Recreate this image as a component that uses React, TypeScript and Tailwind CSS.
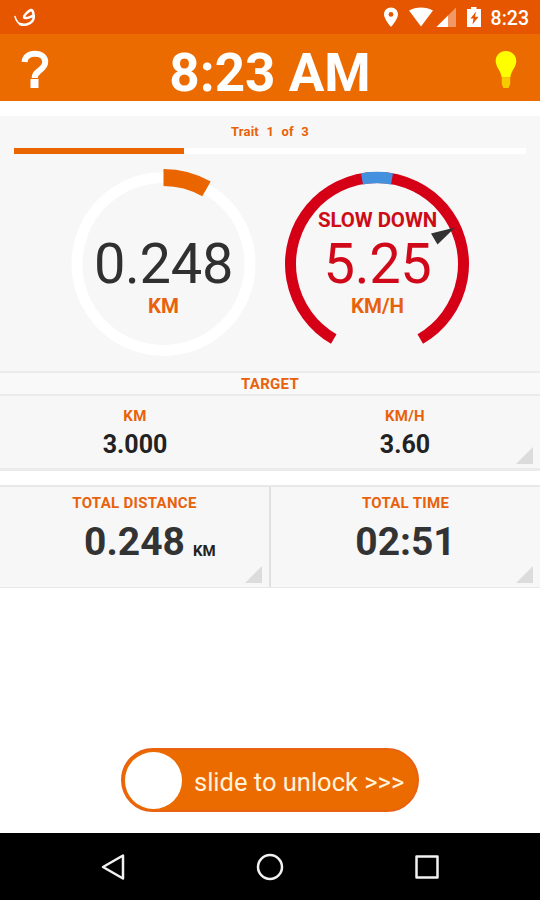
import React from 'react';
import { clsx } from 'clsx';

interface LabelProps {
  children: React.ReactNode;
  className?: string;
}

const Label: React.FC<LabelProps> = ({ children, className }) => (
  <div className={clsx('font-bold text-[#e8620c] whitespace-nowrap', className)}>{children}</div>
);

const Corner: React.FC = () => (
  <svg className="absolute right-[7px] bottom-[4px]" width="17" height="17" viewBox="0 0 17 17">
    <path d="M17 0V17H0Z" fill="#dcdcdc" />
  </svg>
);

// clockwise arc, angles in degrees from 12 o'clock
const arc = (cx: number, cy: number, r: number, from: number, to: number) => {
  const pt = (a: number) => {
    const rad = (a * Math.PI) / 180;
    return `${(cx + r * Math.sin(rad)).toFixed(2)} ${(cy - r * Math.cos(rad)).toFixed(2)}`;
  };
  return `M${pt(from)}A${r} ${r} 0 ${to - from > 180 ? 1 : 0} 1 ${pt(to)}`;
};

const StatusBar: React.FC = () => (
  <div className="h-[34px] bg-[#e65500] flex items-center justify-between pl-[14px] pr-[11px]">
    <svg width="22" height="20" viewBox="0 0 22 20" fill="none" stroke="#fff" strokeLinecap="round" strokeLinejoin="round">
      <path d="M1 9.500C2 14 5 17.500 9.500 17.800" strokeWidth="1.500" />
      <path d="M6 17C12 19.500 20.500 15.500 19.700 9C19.300 5 18.500 2.500 17 3C14.500 4 10 8 10 10.200C10.500 12.200 16.500 10.500 19 8.500" strokeWidth="2.500" />
    </svg>
    <div className="flex items-center">
      <svg width="104" height="22" viewBox="0 0 104 22" className="mr-[4px]">
        <path fillRule="evenodd" d="M8 1.500C4 1.500 1 4.500 1 8.300C1 13.300 8 21 8 21S15 13.300 15 8.300C15 4.500 12 1.500 8 1.500ZM8 6A2.400 2.400 0 1 1 8 10.800A2.400 2.400 0 1 1 8 6Z" fill="#fff" />
        <path d="M26 4.500C33 0.500 43 0.500 50 4.500L38 20.500Z" fill="#fff" />
        <path d="M73 1.500V21H53.500Z" fill="#fff" opacity=".4" />
        <path d="M65 9.500V21H53.500Z" fill="#fff" />
        <path d="M88 1H93.500V3H98V21H84V3H88Z" fill="#fff" />
        <path d="M93 5.500L87.500 12.500H90.500L89.500 18.500L95.500 10.800H92Z" fill="#e65500" />
      </svg>
      <span className="text-[19.5px] leading-[20px] font-medium text-white mt-[3px]">8:23</span>
    </div>
  </div>
);

const Header: React.FC = () => (
  <div className="h-[67px] bg-[#ec6b00] grid grid-cols-[70px_1fr_70px] items-center">
    <svg className="ml-[20px]" width="30" height="40" viewBox="0 0 30 40">
      <path d="M4.500 13C5 8 8.500 4.800 14.800 4.800C21.500 4.800 25.200 8 25.200 13C25.200 16.500 23 18.800 19.800 21.300C16.500 24 14.700 25 14.700 29" fill="none" stroke="#fff" strokeWidth="6" />
      <path d="M10.500 30H18.500V39H10.500Z" fill="#fff" />
    </svg>
    <div className="text-center text-[53px] leading-[60px] font-bold text-white whitespace-nowrap mt-[9px]">8:23 AM</div>
    <svg className="ml-[25px]" width="22" height="40" viewBox="0 0 22 40">
      <path d="M11 2C4.800 2 0.700 6.500 0.700 12C0.700 18 5.500 21 6.800 28.500H15.200C16.500 21 21.300 18 21.300 12C21.300 6.500 17.200 2 11 2Z" fill="#ff0" />
      <path d="M6.800 28.500H15.200V35L13.500 39H8.500L6.800 35Z" fill="#f5cc00" />
    </svg>
  </div>
);

const DistanceGauge: React.FC = () => (
  <div className="relative w-[214px] h-[206px]">
    <svg className="absolute inset-0" width="214" height="206" viewBox="0 0 214 206" fill="none">
      <circle cx="107.500" cy="104" r="86.500" stroke="#fff" strokeWidth="11" />
      <path d={arc(107.5, 104, 86.5, 0, 29.8)} stroke="#ea6500" strokeWidth="17" />
    </svg>
    <div className="relative pt-[74px] pl-px text-center">
      <div className="text-[56px] leading-[60px] tracking-[-0.3px] text-[#303030]">0.248</div>
      <Label className="text-[20.5px] leading-6">KM</Label>
    </div>
  </div>
);

const SpeedGauge: React.FC = () => (
  <div className="relative w-[214px] h-[206px]">
    <svg className="absolute inset-0" width="214" height="206" viewBox="0 0 214 206" fill="none">
      <path d={arc(107, 104, 86.5, -150, 150)} stroke="#d60016" strokeWidth="11" />
      <path d={arc(107, 104, 86.5, -10, 10)} stroke="#4390df" strokeWidth="11.500" />
      <path d="M185 67.500L161 73.500L167.500 84.500Z" fill="#333" />
    </svg>
    <div className="relative pt-[48px] pl-px text-center">
      <div className="text-[20.5px] leading-6 font-bold tracking-[-0.1px] text-[#cd0c18]">SLOW DOWN</div>
      <div className="mt-[2px] text-[56px] leading-[60px] tracking-[-0.3px] text-[#d0091a]">5.25</div>
      <Label className="text-[20.5px] leading-6">KM/H</Label>
    </div>
  </div>
);

const TARGETS = [
  { unit: 'KM', value: '3.000' },
  { unit: 'KM/H', value: '3.60' },
];

const TOTALS = [
  { label: 'TOTAL DISTANCE', value: '0.248', unit: 'KM' },
  { label: 'TOTAL TIME', value: '02:51' },
];

const NavBar: React.FC = () => (
  <div className="h-[67px] bg-black flex items-center justify-between px-[98px]">
    <svg width="30" height="30" viewBox="0 0 30 30" fill="none" stroke="#f2f2f2" strokeWidth="2.500">
      <path d="M25 3.500V26.500L5 15Z" strokeLinejoin="round" />
    </svg>
    <svg width="30" height="30" viewBox="0 0 30 30" fill="none" stroke="#f2f2f2" strokeWidth="2.500">
      <circle cx="15" cy="15" r="12" />
    </svg>
    <svg width="30" height="30" viewBox="0 0 30 30" fill="none" stroke="#f2f2f2" strokeWidth="2.500">
      <path d="M4.500 4.500H25.500V25.500H4.500Z" strokeLinejoin="round" />
    </svg>
  </div>
);

const App: React.FC = () => {
  return (
    <div className="w-[540px] h-[900px] bg-white flex flex-col overflow-hidden font-[Roboto,sans-serif]">
      <StatusBar />
      <Header />

      <div className="mt-[15px] h-[255px] bg-[#f7f7f7]">
        <Label className="pt-[6px] text-center text-[13px] leading-5 tracking-[0.2px] [word-spacing:4px]">Trait 1 of 3</Label>
        <div className="mx-[14px] mt-[6px] h-[6px] bg-white">
          <div className="h-full w-[170px] bg-[#ea6500]" />
        </div>
        <div className="flex justify-center mt-[6px]">
          <DistanceGauge />
          <SpeedGauge />
        </div>
      </div>

      <div className="h-[25px] bg-[#f9f9f9] border-y-2 border-[#ebebeb]">
        <Label className="text-center text-[15px] leading-[22px] tracking-[0.3px]">TARGET</Label>
      </div>
      <div className="relative h-[75px] bg-[#f7f7f7] border-b-[3px] border-[#ebebeb] grid grid-cols-2 text-center">
        {TARGETS.map((t) => (
          <div key={t.unit} className="pt-[10px]">
            <Label className="text-[15px] leading-5 tracking-[0.3px]">{t.unit}</Label>
            <div className="mt-[5px] text-[25px] leading-7 font-bold text-[#222]">{t.value}</div>
          </div>
        ))}
        <Corner />
      </div>

      <div className="mt-[14px] h-[103px] bg-[#f7f7f7] border-t-2 border-b border-[#e8e8e8] grid grid-cols-[271px_1fr] text-center">
        {TOTALS.map((t) => (
          <div key={t.label} className="relative pt-[6px] first:border-r-2 border-[#e0e0e0]">
            <Label className="text-[15px] leading-5 tracking-[0.3px]">{t.label}</Label>
            <div className="relative mt-[6px] w-fit mx-auto text-[39px] leading-[46px] font-bold text-[#333]">
              {t.value}
              {t.unit && (
                <span className="absolute left-full bottom-[4px] ml-[8px] text-[15px] leading-5 text-[#222]">{t.unit}</span>
              )}
            </div>
            <Corner />
          </div>
        ))}
      </div>

      <div className="flex-1 flex flex-col justify-end items-center pb-[21px]">
        <div className="w-[298px] h-[64px] rounded-full bg-[#ec6b00] border-2 border-[#e86210] flex items-center pl-[2px]">
          <div className="size-[57px] rounded-full bg-white" />
          <span className="ml-[12px] mt-[4px] text-[25.5px] leading-8 text-[#fff3dc] whitespace-nowrap">slide to unlock &gt;&gt;&gt;</span>
        </div>
      </div>
      <NavBar />
    </div>
  );
};

export default App;
